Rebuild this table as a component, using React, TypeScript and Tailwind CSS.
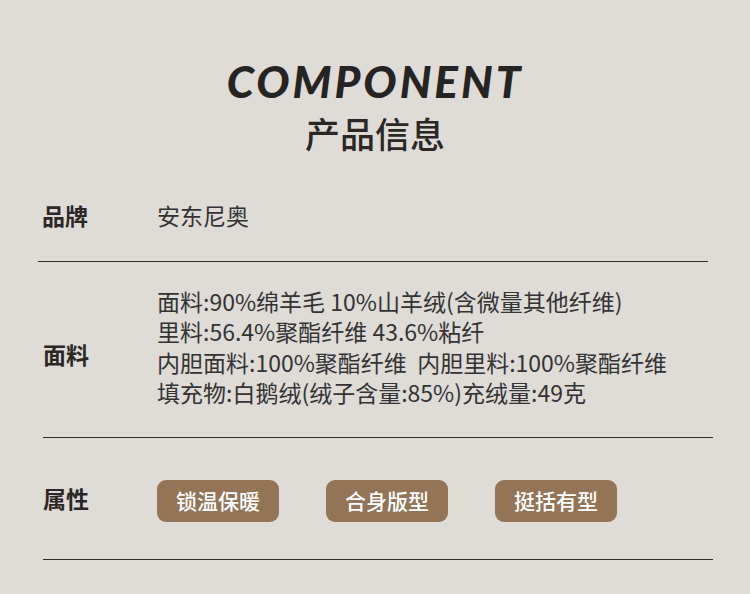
const cjk = { fontFamily: '"Noto Sans CJK SC", "Noto Sans", sans-serif' };

const materials = [
  "面料:90%绵羊毛 10%山羊绒(含微量其他纤维)",
  "里料:56.4%聚酯纤维 43.6%粘纤",
  "内胆面料:100%聚酯纤维  内胆里料:100%聚酯纤维",
  "填充物:白鹅绒(绒子含量:85%)充绒量:49克",
];

const tags = ["锁温保暖", "合身版型", "挺括有型"];

export default function App() {
  return (
    <main
      className="w-[750px] h-[594px] bg-[#dfdbd6] text-[#2a2725] overflow-hidden"
      style={cjk}
    >
      {/* 标题 */}
      <div className="flex flex-col items-center pt-[56px] h-[170px]">
        <h1
          className="text-[44px] leading-[50px] font-black italic tracking-[3px] text-[#262423]"
          style={{ fontFamily: '"Lato", "Open Sans", sans-serif' }}
        >
          COMPONENT
        </h1>
        <h2 className="text-[35px] leading-[44px] font-medium mt-[5px] text-[#2a2725]">
          产品信息
        </h2>
      </div>

      {/* 品牌 */}
      <div className="ml-[38px] w-[670px] h-[92px] flex items-center border-b-[1.5px] border-[#2f2c2a]">
        <span className="w-[119px] pl-[4px] text-[23px] font-bold">品牌</span>
        <span className="text-[23px] text-[#333]">安东尼奥</span>
      </div>

      {/* 面料 */}
      <div className="ml-[43px] w-[670px] h-[176px] flex items-center border-b-[1.5px] border-[#2f2c2a]">
        <span className="w-[114px] text-[23px] font-bold mt-[10px]">面料</span>
        <div className="flex flex-col text-[23px] leading-[30.5px] text-[#333] -mt-[6px] whitespace-pre">
          {materials.map((m) => (
            <span key={m}>{m}</span>
          ))}
        </div>
      </div>

      {/* 属性 */}
      <div className="ml-[43px] w-[670px] h-[122px] flex items-center border-b-[1.5px] border-[#2f2c2a]">
        <span className="w-[114px] text-[23px] font-bold">属性</span>
        <div className="flex gap-[47px] mt-[4px]">
          {tags.map((t) => (
            <span
              key={t}
              className="w-[122px] h-[42px] rounded-[9px] bg-[#937456] text-white text-[21px] font-medium flex items-center justify-center"
            >
              {t}
            </span>
          ))}
        </div>
      </div>
    </main>
  );
}
